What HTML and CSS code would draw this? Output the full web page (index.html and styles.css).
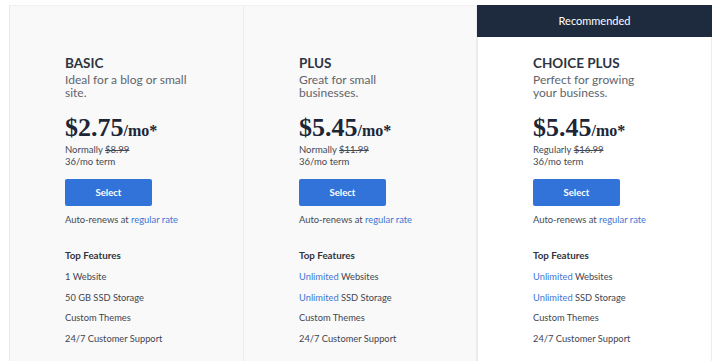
FILE: index.html
```html
<!DOCTYPE html>
<html lang="en">
<head>
<meta charset="utf-8">
<title>Hosting plans</title>
<link rel="stylesheet" href="styles.css">
</head>
<body>
<div class="plans">
  <section class="plan plan--first">
    <div class="plan-body">
      <h2 class="plan-name">BASIC</h2>
      <p class="plan-desc">Ideal for a blog or small site.</p>
      <div class="price"><span class="amount">$2.75</span><span class="per">/mo*</span></div>
      <p class="note">Normally <s>$8.99</s></p>
      <p class="note">36/mo term</p>
      <button class="select">Select</button>
      <p class="renew">Auto-renews at <a href="#">regular rate</a></p>
      <h3 class="features-title">Top Features</h3>
      <ul class="features">
        <li>1 Website</li>
        <li>50 GB SSD Storage</li>
        <li>Custom Themes</li>
        <li>24/7 Customer Support</li>
      </ul>
    </div>
  </section>
  <section class="plan">
    <div class="plan-body">
      <h2 class="plan-name">PLUS</h2>
      <p class="plan-desc">Great for small businesses.</p>
      <div class="price"><span class="amount">$5.45</span><span class="per">/mo*</span></div>
      <p class="note">Normally <s>$11.99</s></p>
      <p class="note">36/mo term</p>
      <button class="select">Select</button>
      <p class="renew">Auto-renews at <a href="#">regular rate</a></p>
      <h3 class="features-title">Top Features</h3>
      <ul class="features">
        <li><span class="hl">Unlimited</span> Websites</li>
        <li><span class="hl">Unlimited</span> SSD Storage</li>
        <li>Custom Themes</li>
        <li>24/7 Customer Support</li>
      </ul>
    </div>
  </section>
  <section class="plan plan--rec">
    <div class="rec-head">Recommended</div>
    <div class="plan-body">
      <h2 class="plan-name">CHOICE PLUS</h2>
      <p class="plan-desc">Perfect for growing your business.</p>
      <div class="price"><span class="amount">$5.45</span><span class="per">/mo*</span></div>
      <p class="note">Regularly <s>$16.99</s></p>
      <p class="note">36/mo term</p>
      <button class="select">Select</button>
      <p class="renew">Auto-renews at <a href="#">regular rate</a></p>
      <h3 class="features-title">Top Features</h3>
      <ul class="features">
        <li><span class="hl">Unlimited</span> Websites</li>
        <li><span class="hl">Unlimited</span> SSD Storage</li>
        <li>Custom Themes</li>
        <li>24/7 Customer Support</li>
      </ul>
    </div>
  </section>
</div>
</body>
</html>
```

FILE: styles.css
```css
* { box-sizing: border-box; }

body {
  margin: 0;
  background: #ffffff;
  font-family: Lato, "Open Sans", "Liberation Sans", sans-serif;
  color: #3a414c;
}

.plans {
  display: grid;
  grid-template-columns: 235px 233px 235px;
  padding: 5px 0 0 9px;
  height: 361px;
  overflow: hidden;
}

.plan {
  background: #f9f9f9;
  border-right: 1px solid #ececec;
  border-top: 1px solid #f1f1f1;
  height: 400px;
}

.plan--first {
  border-left: 1px solid #e9e9e9;
}

.plan--rec {
  background: #ffffff;
  border-top: none;
  border-left: 1px solid #ececec;
}

.rec-head {
  height: 32px;
  background: #1e2a3e;
  color: #ffffff;
  font-size: 11px;
  line-height: 32px;
  text-align: center;
  margin: 0 -1px 0 -1px;
}

.plan-body {
  padding: 49px 20px 0 55px;
}

.plan--rec .plan-body {
  padding-top: 18px;
}

.plan-name {
  margin: 0;
  font-size: 13.5px;
  line-height: 16px;
  font-weight: 700;
  color: #2e3440;
}

.plan-desc {
  margin: 2px 0 0;
  max-width: 125px;
  font-size: 12px;
  line-height: 13px;
  color: #60656d;
}

.price {
  margin-top: 14px;
  height: 30px;
  line-height: 30px;
  font-family: "Liberation Serif", "Times New Roman", serif;
  font-weight: 700;
  color: #1d2636;
}

.amount { font-size: 26px; }
.per { font-size: 16px; }

.note {
  margin: 0;
  font-size: 9.5px;
  line-height: 12px;
  color: #434955;
}

.price + .note { margin-top: 1px; }

.select {
  display: block;
  margin-top: 11px;
  width: 87px;
  height: 27px;
  border: none;
  border-radius: 2px;
  background: #3273d9;
  color: #ffffff;
  font-family: inherit;
  font-size: 9.5px;
  font-weight: 700;
  padding: 0;
}

.renew {
  margin: 8px 0 0;
  font-size: 9.4px;
  line-height: 12px;
  color: #434955;
}

.renew a, .hl {
  color: #3d77d3;
  text-decoration: none;
}

.features-title {
  margin: 23px 0 0;
  font-size: 9.8px;
  line-height: 12px;
  font-weight: 700;
  color: #2e3440;
}

.features {
  list-style: none;
  margin: 6px 0 0;
  padding: 0;
}

.features li {
  font-size: 9.3px;
  line-height: 20.6px;
  color: #3f4550;
}
```
